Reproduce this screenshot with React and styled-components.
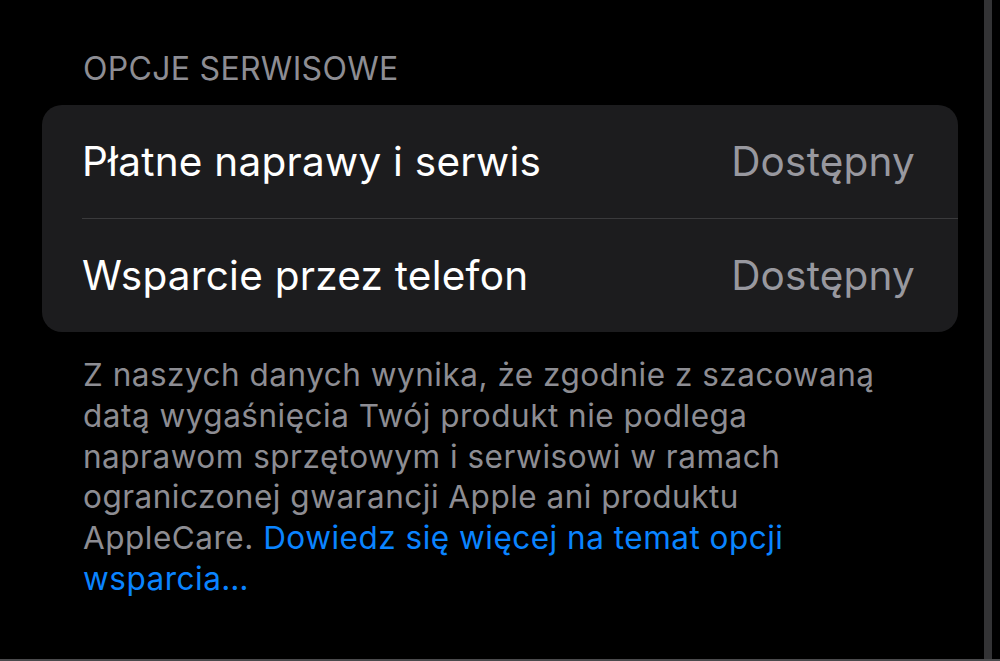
import React from "react";
import styled, { createGlobalStyle } from "styled-components";

const GlobalStyle = createGlobalStyle`
  html, body {
    margin: 0;
    padding: 0;
    background: #000000;
  }
  body {
    font-family: "Inter", "Liberation Sans", sans-serif;
    -webkit-font-smoothing: antialiased;
  }
`;

const Page = styled.div`
  display: flex;
  height: 661px;
  box-sizing: border-box;
  border-bottom: 2px solid #4a4a4c;
  overflow: hidden;
`;

const Main = styled.div`
  flex: none;
  width: 916px;
  margin-left: 42px;
`;

const ScrollEdge = styled.div`
  flex: none;
  width: 8px;
  margin-left: 26px;
  background: #333335;
`;

const SectionHeader = styled.div`
  height: 105px;
  box-sizing: border-box;
  padding: 50px 0 0 41px;
  font-size: 32px;
  line-height: 38px;
  letter-spacing: 0.3px;
  color: #8d8d93;
  text-transform: uppercase;
`;

const Card = styled.div`
  background: #1c1c1e;
  border-radius: 20px;
  overflow: hidden;
`;

const Row = styled.div`
  display: flex;
  align-items: center;
  justify-content: space-between;
  height: 113px;
  padding: 0 43px 0 40px;
`;

const Label = styled.span`
  font-size: 40.5px;
  color: #ffffff;
  letter-spacing: 0.25px;
`;

const Value = styled.span`
  font-size: 40.5px;
  color: #98989f;
  letter-spacing: 0.2px;
`;

const Divider = styled.div`
  height: 1px;
  margin-left: 40px;
  background: #3a3a3c;
`;

const Footer = styled.p`
  margin: 0;
  padding: 23px 40px 0 41px;
  font-size: 31.5px;
  line-height: 40.8px;
  letter-spacing: 0.5px;
  color: #8d8d93;
`;

const Link = styled.a`
  color: #0a84ff;
  text-decoration: none;
`;

const options = [
  { label: "Płatne naprawy i serwis", value: "Dostępny" },
  { label: "Wsparcie przez telefon", value: "Dostępny" },
];

const App = () => {
  return (
    <>
      <GlobalStyle />
      <Page>
        <Main>
          <SectionHeader>Opcje serwisowe</SectionHeader>
          <Card>
            {options.map((opt, i) => (
              <React.Fragment key={opt.label}>
                {i > 0 && <Divider />}
                <Row>
                  <Label>{opt.label}</Label>
                  <Value>{opt.value}</Value>
                </Row>
              </React.Fragment>
            ))}
          </Card>
          <Footer>
            Z naszych danych wynika, że zgodnie z szacowaną
            <br />
            datą wygaśnięcia Twój produkt nie podlega
            <br />
            naprawom sprzętowym i serwisowi w ramach
            <br />
            ograniczonej gwarancji Apple ani produktu
            <br />
            AppleCare. <Link href="#">Dowiedz się więcej na temat opcji
            <br />
            wsparcia…</Link>
          </Footer>
        </Main>
        <ScrollEdge />
      </Page>
    </>
  );
};

export default App;
